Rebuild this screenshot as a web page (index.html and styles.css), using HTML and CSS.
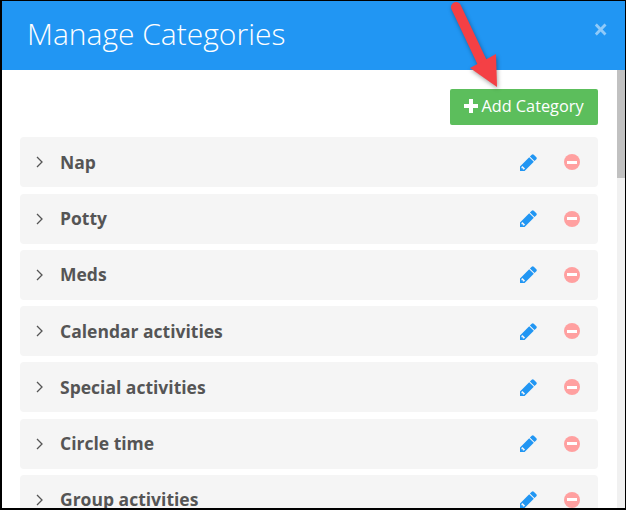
FILE: index.html
```html
<!DOCTYPE html>
<html lang="en">
<head>
<meta charset="utf-8">
<title>Manage Categories</title>
<link rel="stylesheet" href="styles.css">
</head>
<body>
<svg class="defs" aria-hidden="true"><symbol id="pencil" viewBox="128 128 1536 1536"><path d="M491 1536l91-91-235-235-91 91v107h128v128h107zM960 416l416 416-832 832h-416v-416zm683 96q0 53-37 90l-166 166-416-416 166-165q36-38 90-38 53 0 91 38l235 234q37 39 37 91z"/></symbol><symbol id="chev" viewBox="0 0 8 12"><path d="M1 1l5 5-5 5"/></symbol></svg>
<div class="frame">
  <header class="modal-header">
    <h1 class="modal-title">Manage Categories</h1>
    <span class="close">×</span>
  </header>
  <div class="content">
    <main class="modal-body">
      <div class="toolbar">
        <button class="add-btn">
          <svg class="plus" viewBox="0 0 14 14"><path d="M5 0h4v5h5v4H9v5H5V9H0V5h5z"/></svg>
          <span>Add Category</span>
        </button>
      </div>
      <ul class="list">
        <li class="row"><svg class="chev"><use href="#chev"/></svg><span class="name">Nap</span><svg class="pencil"><use href="#pencil"/></svg><span class="remove"><i></i></span></li>
        <li class="row"><svg class="chev"><use href="#chev"/></svg><span class="name">Potty</span><svg class="pencil"><use href="#pencil"/></svg><span class="remove"><i></i></span></li>
        <li class="row"><svg class="chev"><use href="#chev"/></svg><span class="name">Meds</span><svg class="pencil"><use href="#pencil"/></svg><span class="remove"><i></i></span></li>
        <li class="row"><svg class="chev"><use href="#chev"/></svg><span class="name">Calendar activities</span><svg class="pencil"><use href="#pencil"/></svg><span class="remove"><i></i></span></li>
        <li class="row"><svg class="chev"><use href="#chev"/></svg><span class="name">Special activities</span><svg class="pencil"><use href="#pencil"/></svg><span class="remove"><i></i></span></li>
        <li class="row"><svg class="chev"><use href="#chev"/></svg><span class="name">Circle time</span><svg class="pencil"><use href="#pencil"/></svg><span class="remove"><i></i></span></li>
        <li class="row"><svg class="chev"><use href="#chev"/></svg><span class="name">Group activities</span><svg class="pencil"><use href="#pencil"/></svg><span class="remove"><i></i></span></li>
      </ul>
    </main>
    <div class="scrollbar"><div class="thumb"></div></div>
  </div>
  <svg class="arrow" viewBox="0 0 60 90"><path d="M11 7L37 62" class="shaft"/><path class="head" d="M52 87L51 54 25 68z"/></svg>
</div>
</body>
</html>
```
FILE: styles.css
```css
* { box-sizing: border-box; }
html, body { margin: 0; padding: 0; height: 510px; overflow: hidden; background: #000; }
body { font-family: "Open Sans", sans-serif; }
.defs { display: none; }
.frame {
  position: relative;
  width: 626px;
  height: 510px;
  display: flex;
  flex-direction: column;
  padding: 1px 1px 2px 2px;
  overflow: hidden;
}
.modal-header {
  height: 69px;
  flex: none;
  background: #2196f3;
  display: flex;
  align-items: center;
  justify-content: space-between;
  padding: 0 17px 4px 25px;
  color: #fff;
}
.modal-title { margin: 0; font-size: 30px; font-weight: 300; line-height: 1; }
.close { font-size: 26px; font-weight: 700; opacity: .5; line-height: 1; margin-bottom: 10px; }
.content { flex: 1; min-height: 0; display: flex; background: #fff; overflow: hidden; }
.modal-body { flex: 1; min-width: 0; padding: 19px 19px 0 18px; }
.toolbar { display: flex; justify-content: flex-end; margin-bottom: 12.45px; }
.add-btn {
  width: 148px;
  height: 36px;
  border: 0;
  border-radius: 2px;
  background: #5cbe5c;
  color: #fff;
  font: 400 16.3px "Open Sans", sans-serif;
  display: flex;
  align-items: center;
  justify-content: center;
  gap: 3px;
  padding: 0 0 2px;
}
.plus { width: 14px; height: 14px; fill: #fff; }
.list { list-style: none; margin: 0; padding: 0; display: flex; flex-direction: column; gap: 6.25px; }
.row {
  height: 50px;
  flex: none;
  display: flex;
  align-items: center;
  background: #f5f5f5;
  border-radius: 4px;
  padding: 0 18px 0 16px;
  color: #555;
}
.chev { width: 8px; height: 12px; fill: none; stroke: #555; stroke-width: 1.3; flex: none; }
.name { flex: 1; margin-left: 16px; padding-bottom: 1.3px; font-size: 17.5px; font-weight: 700; }
.pencil { width: 17px; height: 17px; fill: #2196f3; flex: none; }
.remove {
  width: 16px;
  height: 16px;
  margin-left: 27px;
  border-radius: 50%;
  background: #ffa0a0;
  display: flex;
  align-items: center;
  justify-content: center;
  flex: none;
}
.remove i { display: block; width: 10px; height: 3px; background: #fff; }
.scrollbar { width: 8px; flex: none; background: #f1f1f1; }
.thumb { height: 108px; background: #c1c1c1; }
.arrow { position: absolute; left: 445px; top: 0; width: 60px; height: 90px; overflow: visible; filter: drop-shadow(1px 2px 2px rgba(0,0,0,.35)); }
.shaft { stroke: #f44045; stroke-width: 10; stroke-linecap: round; fill: none; }
.head { fill: #f44045; }
```
